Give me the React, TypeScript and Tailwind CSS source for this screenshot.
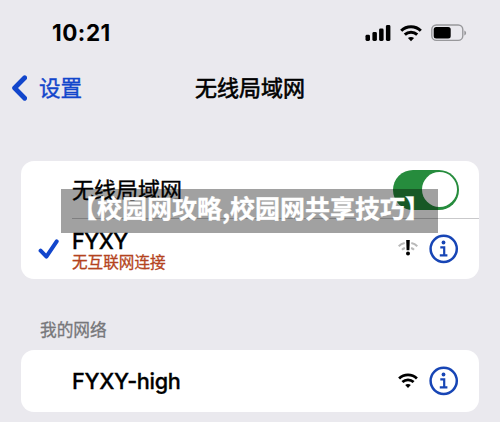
import React from 'react';

const cjk = "font-['Inter','Noto_Sans_CJK_SC',sans-serif]";

function Wifi({ className }: { className: string }) {
  return (
    <svg viewBox="0 0 22 17" className={className} fill="none" stroke="#000" strokeWidth="3">
      <path d="M1.2 5.7C6.6 0.4 15.4 0.4 20.8 5.7" />
      <path d="M4.8 9.7C8.3 6.4 13.7 6.4 17.2 9.7" />
      <path d="M11 16.2L7.9 13C9.6 11.5 12.4 11.5 14.1 13Z" fill="#000" stroke="none" />
    </svg>
  );
}

function WeakWifi() {
  return (
    <svg viewBox="0 0 20 18" className="h-[18px] w-5" fill="none">
      <g stroke="#b9b9b9" strokeWidth="2">
        <path d="M0.7 6.3C2.4 4.6 4.4 3.6 6.7 3.1" />
        <path d="M13.3 3.1C15.6 3.6 17.6 4.6 19.3 6.3" />
        <path d="M4 9.8C4.9 8.9 5.8 8.4 6.9 8" />
        <path d="M13.1 8C14.2 8.4 15.1 8.9 16 9.8" />
      </g>
      <path d="M8.2 0H11.8L11.4 10.2H8.6Z" fill="#000" />
      <circle cx="10" cy="13.4" r="2" fill="#000" />
    </svg>
  );
}

function Info() {
  return (
    <svg viewBox="0 0 30 30" className="size-[30px]" fill="none" stroke="#1745b5">
      <circle cx="14.7" cy="14.8" r="13.1" strokeWidth="2.5" />
      <circle cx="14.5" cy="8.5" r="1.9" fill="#1745b5" stroke="none" />
      <path d="M11.3 13.3H15.2V21.4M10.8 21.3H18.4" strokeWidth="2.2" />
    </svg>
  );
}

function StatusBar() {
  return (
    <header className="flex h-[66px] items-center justify-between pl-[52px] pr-[33px]">
      <span className="text-[22.5px] font-bold leading-none tracking-[0.5px]">10:21</span>
      <div className="flex items-center">
        <svg viewBox="0 0 26 17" className="h-[17px] w-[26px]">
          <rect x="0.5" y="9.8" width="4.5" height="6.2" rx="1.4" />
          <rect x="7.4" y="7" width="4.5" height="9" rx="1.4" />
          <rect x="14.1" y="3.5" width="4.5" height="12.5" rx="1.4" />
          <rect x="20.9" y="0" width="4.5" height="16" rx="1.4" />
        </svg>
        <Wifi className="ml-[9px] h-[17px] w-[22px]" />
        <svg viewBox="0 0 36 18" className="ml-[9px] h-[18px] w-9">
          <rect x="0.8" y="1" width="31" height="15.4" rx="4.6" fill="none" stroke="#98989b" strokeWidth="1.4" />
          <rect x="2.7" y="3" width="17" height="11.4" rx="2.5" />
          <path d="M33.3 6.5C35.7 7.5 35.7 10.5 33.3 11.5Z" fill="#98989b" />
        </svg>
      </div>
    </header>
  );
}

export default function App() {
  return (
    <main className={`relative h-[422px] w-[500px] overflow-hidden bg-[#eae9ee] text-black ${cjk}`}>
      <StatusBar />
      <nav className="grid h-[44px] grid-cols-[1fr_auto_1fr] items-center">
        <div className="flex items-center text-[#1246cc]">
          <svg viewBox="0 0 16 26" className="ml-[11px] h-[26px] w-4" fill="none" stroke="currentColor" strokeWidth="4.8" strokeLinecap="round" strokeLinejoin="round">
            <path d="M13.7 2.8L3.6 13L13.7 23.2" />
          </svg>
          <span className="ml-3 pt-[2px] text-[21.5px] font-normal leading-none [-webkit-text-stroke:0.4px_currentColor]">设置</span>
        </div>
        <h1 className="text-[22px] font-normal leading-none [-webkit-text-stroke:0.6px_currentColor]">无线局域网</h1>
      </nav>

      <section className="mx-[21px] mt-[51px] h-[118px] rounded-[13px] bg-white">
        <div className="flex h-[57px] items-center justify-between pl-[51px] pr-5">
          <span className="text-[22px] font-normal leading-none [-webkit-text-stroke:0.4px_currentColor]">无线局域网</span>
          <div className="flex h-[40px] w-[66px] items-center justify-end rounded-full bg-[#268c3d] pr-[2px]">
            <div className="size-[35px] rounded-full bg-white" />
          </div>
        </div>
        <div className="ml-[51px] h-px bg-[#c9c9cb]" />
        <div className="flex h-[60px] items-center pr-5">
          <svg viewBox="0 0 22 22" className="ml-[17px] h-[22px] w-[22px]" fill="none" stroke="#1246cc" strokeWidth="4" strokeLinecap="round" strokeLinejoin="round">
            <path d="M2.6 12.7L8.4 18.6L18.7 3.4" />
          </svg>
          <div className="ml-3 flex-1 pt-[3px]">
            <p className="text-[21.5px] font-medium leading-6 tracking-[-0.5px] [-webkit-text-stroke:0.3px_currentColor]">FYXY</p>
            <p className="text-[15.6px] font-normal leading-5 text-[#b44320] [-webkit-text-stroke:0.3px_currentColor]">无互联网连接</p>
          </div>
          <WeakWifi />
          <div className="ml-[11px]"><Info /></div>
        </div>
      </section>

      <h2 className="ml-10 mt-[42px] pt-px text-[16.7px] font-normal leading-[17px] text-[#77777a] [-webkit-text-stroke:0.3px_currentColor]">我的网络</h2>
      <section className="mx-[21px] mt-[11px] flex h-[62px] items-center rounded-[13px] bg-white pl-[51px] pr-5">
        <span className="flex-1 pt-px text-[21.7px] font-medium leading-none tracking-[-0.35px] [-webkit-text-stroke:0.3px_currentColor]">FYXY-high</span>
        <Wifi className="h-4 w-5" />
        <div className="ml-[11px]"><Info /></div>
      </section>

      <div className="absolute left-[61px] top-[189px] flex h-11 w-[377px] items-center justify-center whitespace-nowrap bg-black/[0.37] pb-[7px] pl-[3px] font-['Noto_Sans_CJK_SC',sans-serif] text-[25px] font-bold leading-none text-white [-webkit-text-stroke:0.3px_white]">
        【校园网攻略,校园网共享技巧】
      </div>
    </main>
  );
}
